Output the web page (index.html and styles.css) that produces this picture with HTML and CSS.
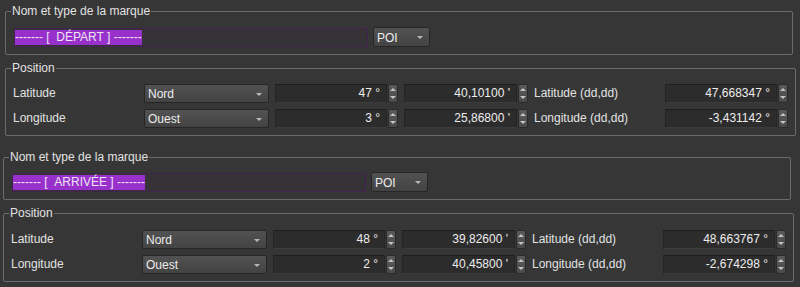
FILE: index.html
```html
<!DOCTYPE html>
<html>
<head>
<meta charset="UTF-8">
<title>Marques</title>
<link rel="stylesheet" href="styles.css">
</head>
<body>

<!-- marque de départ -->
<div class="mark markStart">
	<fieldset class="group groupName">
		<legend>Nom et type de la marque</legend>
		<div class="nameRow">
			<div class="nameInput"><span class="selected">-------&nbsp;[&nbsp;&nbsp;DÉPART ]&nbsp;-------</span></div>
			<div class="combo comboType">POI<span class="arrow"></span></div>
		</div>
	</fieldset>

	<fieldset class="group groupPos">
		<legend>Position</legend>
		<div class="posGrid">
			<span class="label">Latitude</span>
			<div class="combo">Nord<span class="arrow"></span></div>
			<div class="spin"><span class="field">47 °</span><span class="btns"></span></div>
			<div class="spin"><span class="field">40,10100 '</span><span class="btns"></span></div>
			<span class="label">Latitude (dd,dd)</span>
			<div class="spin"><span class="field">47,668347 °</span><span class="btns"></span></div>

			<span class="label">Longitude</span>
			<div class="combo">Ouest<span class="arrow"></span></div>
			<div class="spin"><span class="field">3 °</span><span class="btns"></span></div>
			<div class="spin"><span class="field">25,86800 '</span><span class="btns"></span></div>
			<span class="label">Longitude (dd,dd)</span>
			<div class="spin"><span class="field">-3,431142 °</span><span class="btns"></span></div>
		</div>
	</fieldset>
</div>

<!-- marque d'arrivée -->
<div class="mark markEnd">
	<fieldset class="group groupName">
		<legend>Nom et type de la marque</legend>
		<div class="nameRow">
			<div class="nameInput"><span class="selected">-------&nbsp;[&nbsp;&nbsp;ARRIVÉE ]&nbsp;-------</span></div>
			<div class="combo comboType">POI<span class="arrow"></span></div>
		</div>
	</fieldset>

	<fieldset class="group groupPos">
		<legend>Position</legend>
		<div class="posGrid">
			<span class="label">Latitude</span>
			<div class="combo">Nord<span class="arrow"></span></div>
			<div class="spin"><span class="field">48 °</span><span class="btns"></span></div>
			<div class="spin"><span class="field">39,82600 '</span><span class="btns"></span></div>
			<span class="label">Latitude (dd,dd)</span>
			<div class="spin"><span class="field">48,663767 °</span><span class="btns"></span></div>

			<span class="label">Longitude</span>
			<div class="combo">Ouest<span class="arrow"></span></div>
			<div class="spin"><span class="field">2 °</span><span class="btns"></span></div>
			<div class="spin"><span class="field">40,45800 '</span><span class="btns"></span></div>
			<span class="label">Longitude (dd,dd)</span>
			<div class="spin"><span class="field">-2,674298 °</span><span class="btns"></span></div>
		</div>
	</fieldset>
</div>

</body>
</html>
```

FILE: styles.css
```css
/* base */
html, body {
	margin: 0;
	padding: 0;
	background: #363636;
	color: #e2e2e2;
	font-family: "Liberation Sans", Arial, sans-serif;
	font-size: 12px;
	line-height: 14px;
}

.mark {
	width: 788px;
}
.markStart {
	padding: 4px 0 0 5px;
}
.markEnd {
	padding: 14px 0 0 3px;
}

/* group boxes */
.group {
	margin: 0;
	padding: 0 7px 7px 7px;
	border: 1px solid #6c6c6c;
	border-radius: 2px;
}
.group legend {
	padding: 0 1px;
	margin-left: -2px;
	line-height: 14px;
}
.groupPos {
	margin-top: 6px;
}
.groupName .nameRow {
	padding-top: 9px;
}
.markEnd .groupName .nameRow {
	padding-top: 8px;
}
.groupPos .posGrid {
	padding-top: 9px;
}
.markEnd .groupPos .posGrid {
	padding-top: 10px;
}

/* nom */
.nameRow {
	display: flex;
	align-items: center;
	gap: 5px;
	padding-left: 1px;
}
.nameInput {
	width: 352px;
	height: 16px;
	border: 1px solid #44224f;
	padding: 1px 0 0 0;
	background: #363338;
}
.selected {
	display: inline-block;
	background: #9831cc;
	color: #efe4f4;
	height: 15px;
	line-height: 15px;
}

/* combo */
.combo {
	position: relative;
	height: 19px;
	line-height: 19px;
	padding-left: 3px;
	border: 1px solid #262626;
	border-radius: 2px;
	background: linear-gradient(#525252, #434343);
	color: #ececec;
	box-sizing: border-box;
}
.comboType {
	width: 57px;
	height: 20px;
	line-height: 20px;
}
.combo .arrow {
	position: absolute;
	right: 6px;
	top: 50%;
	margin-top: -1px;
	border-left: 3px solid transparent;
	border-right: 3px solid transparent;
	border-top: 3px solid #b8b8b8;
}

/* position */
.posGrid {
	display: grid;
	grid-template-columns: 125px 125px 123px 124px 125px 123px;
	grid-auto-rows: 19px;
	column-gap: 6px;
	row-gap: 6px;
	align-items: center;
}
.label {
	line-height: 19px;
}

/* spin box */
.spin {
	display: flex;
	height: 19px;
	gap: 1px;
}
.spin .field {
	flex: 1;
	text-align: right;
	padding-right: 6px;
	line-height: 17px;
	border: 1px solid #242424;
	border-top-color: #1e1e1e;
	border-bottom-color: #3c3c3c;
	background: #2c2c2c;
	color: #ececec;
}
.spin .btns {
	position: relative;
	width: 10px;
	border: 1px solid #2a2a2a;
	border-radius: 2px;
	background: linear-gradient(#5a5a5a, #4a4a4a);
	box-sizing: border-box;
}
.spin .btns::before,
.spin .btns::after {
	content: "";
	position: absolute;
	left: 1px;
	border-left: 3px solid transparent;
	border-right: 3px solid transparent;
}
.spin .btns::before {
	top: 3px;
	border-bottom: 3px solid #c4c4c4;
}
.spin .btns::after {
	bottom: 3px;
	border-top: 3px solid #c4c4c4;
}
```
